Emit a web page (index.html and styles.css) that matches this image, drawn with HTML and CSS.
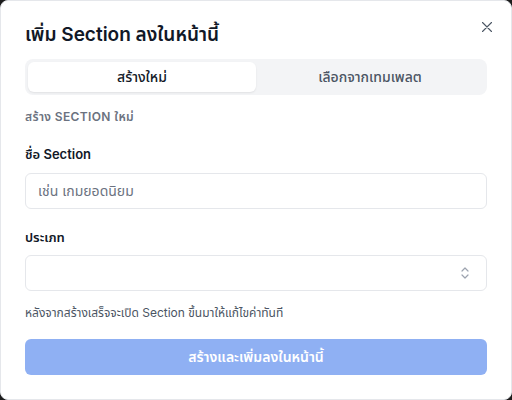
FILE: index.html
```html
<!DOCTYPE html>
<html lang="th">
<head>
<meta charset="utf-8">
<link rel="stylesheet" href="styles.css">
</head>
<body>
<div class="modal">
  <div class="header">
    <h2 class="title">เพิ่ม Section ลงในหน้านี้</h2>
    <button class="close" aria-label="close">
      <svg width="10" height="10" viewBox="0 0 10 10"><path d="M0.5 0.5L9.5 9.5M9.5 0.5L0.5 9.5" stroke="#4b5563" stroke-width="1.1" stroke-linecap="round" fill="none"/></svg>
    </button>
  </div>
  <div class="tabs">
    <div class="tab active">สร้างใหม่</div>
    <div class="tab">เลือกจากเทมเพลต</div>
  </div>
  <div class="section-head">สร้าง SECTION ใหม่</div>
  <label class="label">ชื่อ Section</label>
  <div class="input placeholder">เช่น เกมยอดนิยม</div>
  <label class="label label2">ประเภท</label>
  <div class="input select">
    <span></span>
    <svg width="8" height="14" viewBox="0 0 8 14"><path d="M1 5L4 2L7 5M1 9L4 12L7 9" stroke="#9ca3af" stroke-width="1.2" fill="none" stroke-linecap="round" stroke-linejoin="round"/></svg>
  </div>
  <p class="help">หลังจากสร้างเสร็จจะเปิด Section ขึ้นมาให้แก้ไขค่าทันที</p>
  <button class="submit">สร้างและเพิ่มลงในหน้านี้</button>
</div>
</body>
</html>
```
FILE: styles.css
```css
html, body {
  margin: 0;
  padding: 0;
  background: #1c1c1c;
}
body {
  font-family: Inter, "Noto Sans Thai", "Noto Sans Thai UI", "Noto Sans", sans-serif;
  color: #111827;
}
.modal {
  box-sizing: border-box;
  width: 512px;
  height: 400px;
  background: #fff;
  border: 1px solid #e5e7eb;
  border-radius: 8px;
  padding: 20px 24px 24px;
  display: flex;
  flex-direction: column;
}
.header {
  display: flex;
  justify-content: space-between;
  align-items: flex-start;
  height: 28px;
}
.title {
  margin: 0;
  font-size: 19px;
  line-height: 28px;
  font-weight: 600;
  color: #111827;
}
.close {
  border: 0;
  background: none;
  padding: 0;
  margin: 1px -5px 0 0;
  width: 10px;
  height: 10px;
  display: flex;
}
.tabs {
  margin-top: 10px;
  background: #f3f4f6;
  border-radius: 8px;
  padding: 3px;
  display: grid;
  grid-template-columns: 1fr 1fr;
  height: 36px;
  box-sizing: border-box;
}
.tab {
  display: flex;
  align-items: center;
  justify-content: center;
  font-size: 14px;
  font-weight: 500;
  color: #4b5563;
  border-radius: 6px;
}
.tab.active {
  background: #fff;
  color: #111827;
  box-shadow: 0 1px 2px rgba(0,0,0,0.08);
}
.section-head {
  margin-top: 14px;
  font-size: 12px;
  line-height: 16px;
  font-weight: 600;
  color: #6b7280;
  letter-spacing: 0.03em;
}
.label {
  margin-top: 19px;
  font-size: 13px;
  line-height: 20px;
  font-weight: 600;
  color: #111827;
}
.label2 {
  margin-top: 18px;
}
.input {
  box-sizing: border-box;
  margin-top: 9px;
  height: 36px;
  border: 1px solid #e5e7eb;
  border-radius: 6px;
  padding: 0 12px;
  display: flex;
  align-items: center;
  font-size: 14px;
}
.placeholder {
  color: #6b7280;
}
.select {
  margin-top: 8px;
  justify-content: space-between;
  padding-right: 17px;
}
.help {
  margin: 14px 0 0;
  font-size: 12px;
  line-height: 16px;
  color: #4b5563;
}
.submit {
  margin-top: 18px;
  height: 36px;
  border: 0;
  border-radius: 6px;
  background: #8fb0f3;
  color: #fff;
  font-family: inherit;
  font-size: 14px;
  font-weight: 600;
}
```
